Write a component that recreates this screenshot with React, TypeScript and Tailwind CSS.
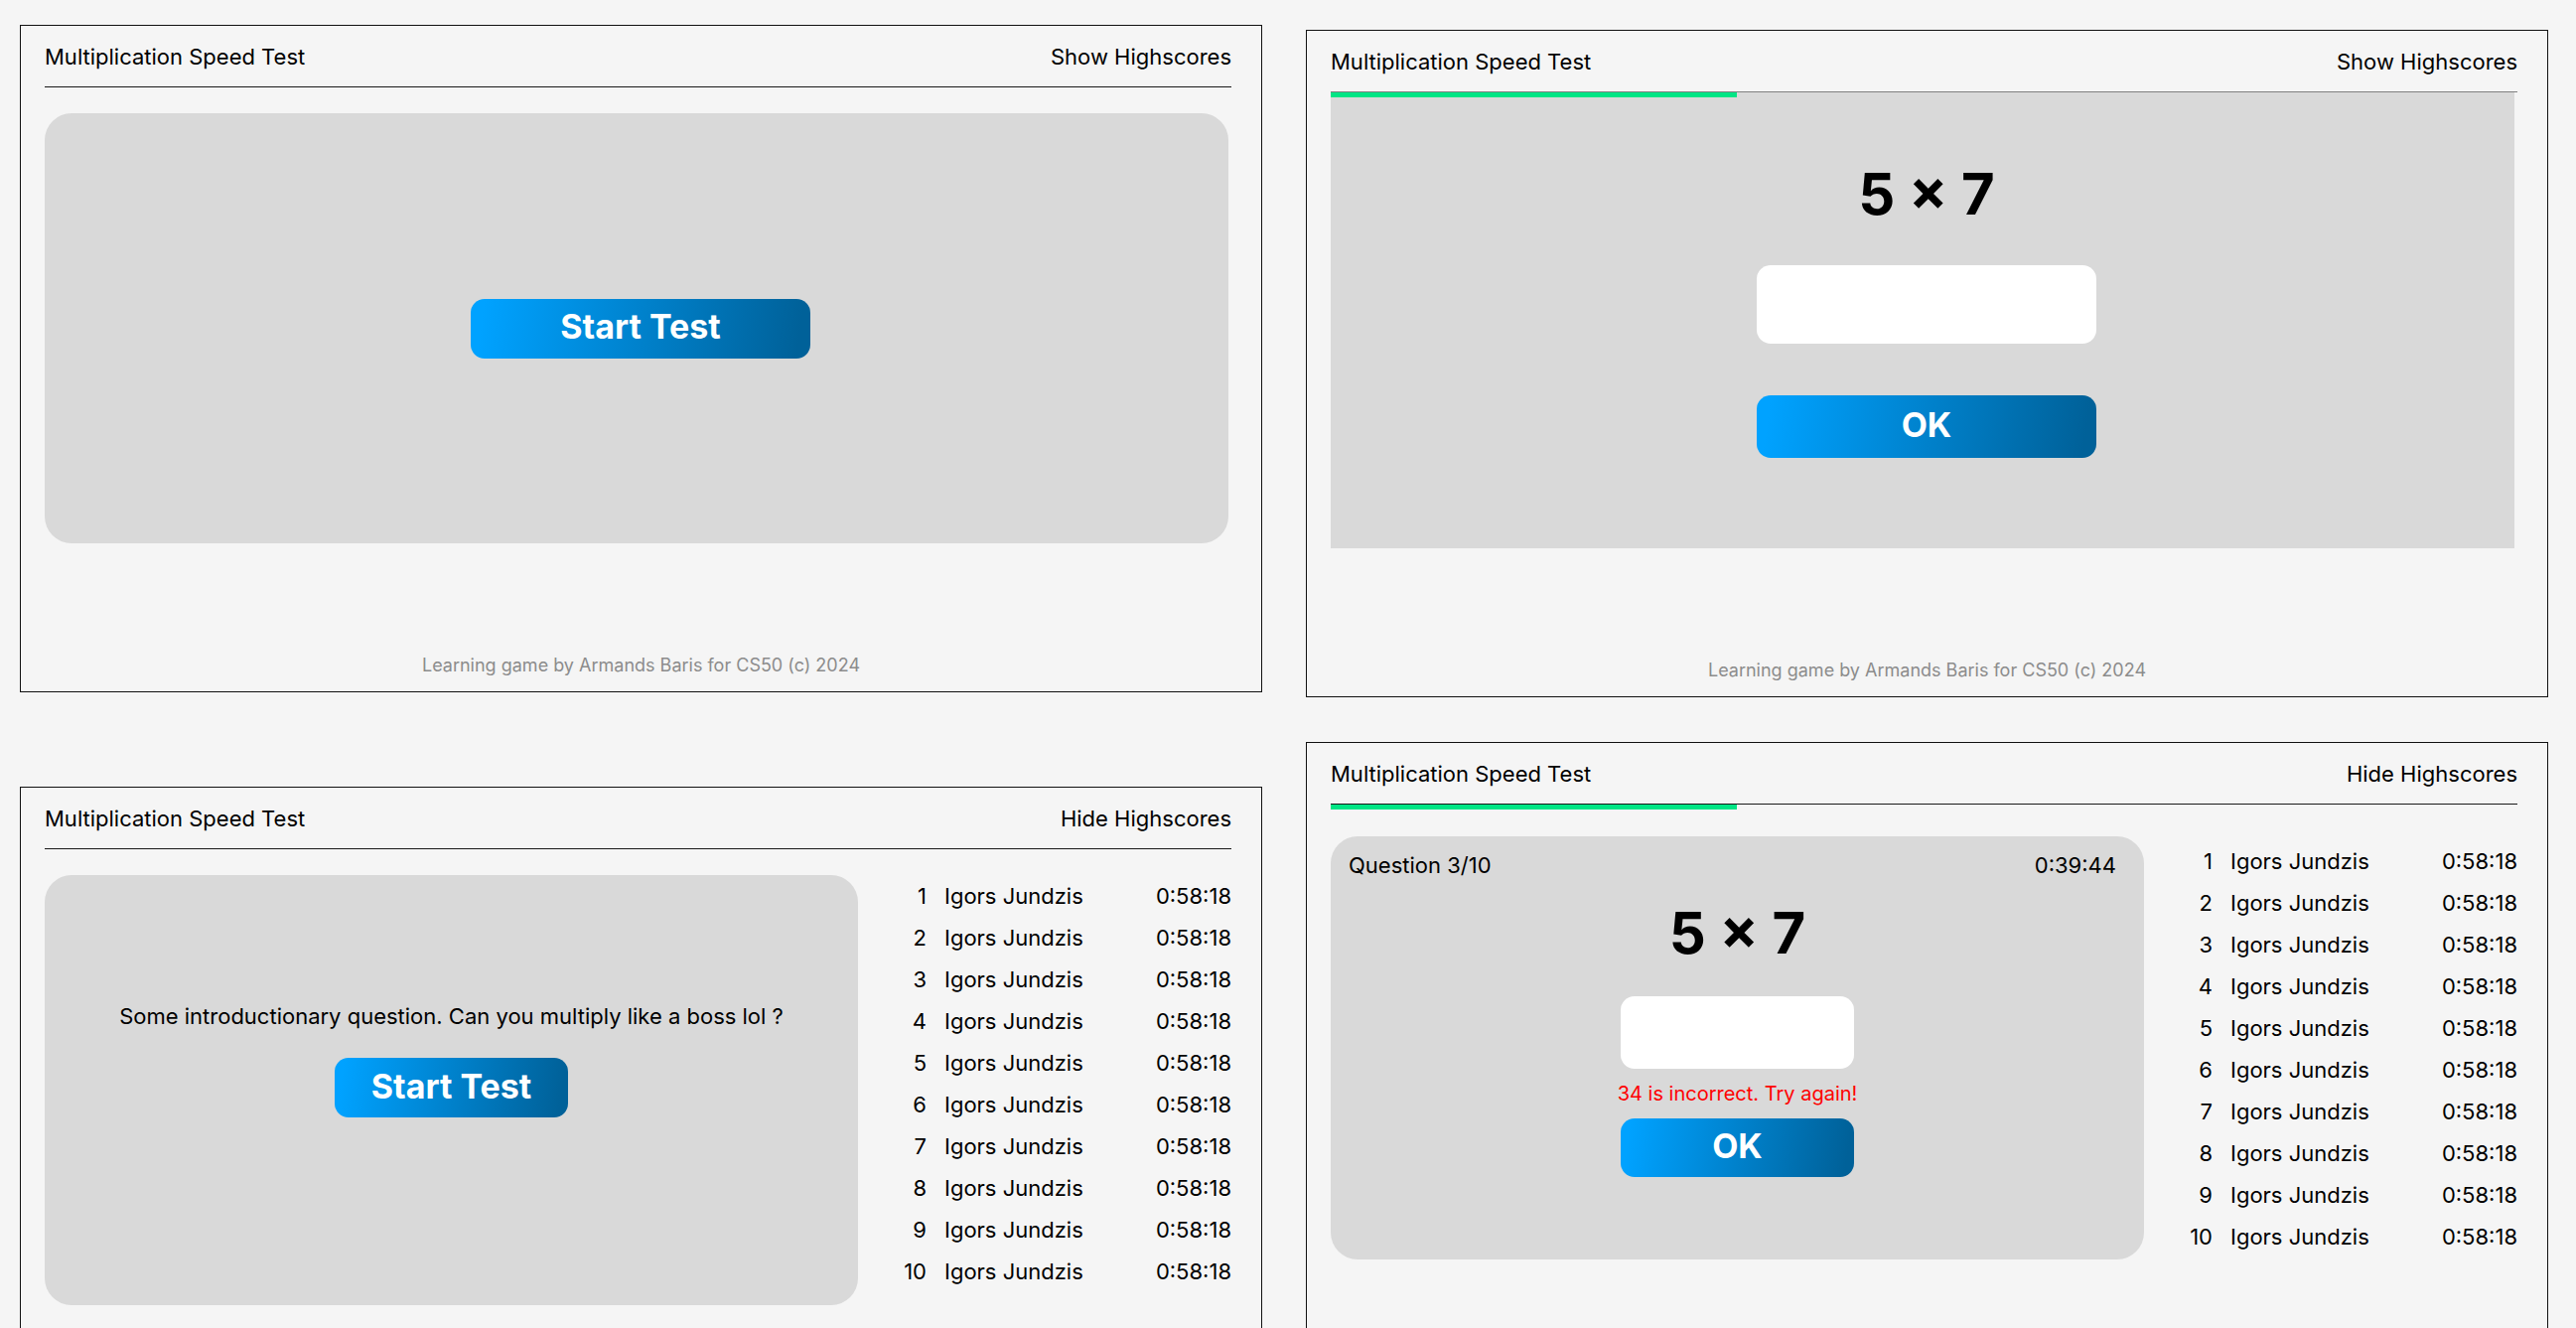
import type { ReactNode } from "react";

const scores = Array.from({ length: 10 }, (_, i) => ({
  rank: i + 1,
  name: "Igors Jundzis",
  time: "0:58:18",
}));

function Frame({
  toggleLabel,
  progress,
  footer,
  rule = "border-[#1a1a1a]",
  className,
  children,
}: {
  toggleLabel: string;
  progress?: number;
  footer?: boolean;
  rule?: string;
  className: string;
  children: ReactNode;
}) {
  return (
    <section className={`flex flex-col border-[#111111] ${className}`}>
      <div className="flex flex-1 flex-col pl-6 pr-[30px]">
        <header className={`relative flex h-[62px] items-center justify-between border-b ${rule}`}>
          <h1>Multiplication Speed Test</h1>
          <button type="button">{toggleLabel}</button>
          {progress !== undefined && (
            <div
              role="progressbar"
              aria-label="Test progress"
              aria-valuenow={progress}
              className="absolute left-0 top-full mt-px h-[5px] bg-[#00e585]"
              style={{ width: `${progress}%` }}
            />
          )}
        </header>
        {children}
      </div>
      {footer && (
        <footer className="pb-3 text-center text-[18px] leading-7 text-[#8c8c8c]">
          Learning game by Armands Baris for CS50 (c) 2024
        </footer>
      )}
    </section>
  );
}

function ActionButton({ className, children }: { className: string; children: ReactNode }) {
  return (
    <button
      type="button"
      className={`rounded-[14px] bg-[linear-gradient(98deg,#00a2ff_4%,#006199_96%)] pb-[3px] text-center text-[34px] font-bold leading-10 text-white ${className}`}
    >
      {children}
    </button>
  );
}

function Equation() {
  return <h2 className="text-center text-[58px] font-bold leading-[72px]">5 × 7</h2>;
}

function Highscores() {
  return (
    <table className="w-full table-fixed self-start" aria-label="Highscores">
      <colgroup>
        <col className="w-[25px]" />
        <col />
        <col className="w-24" />
      </colgroup>
      <tbody>
        {scores.map((s) => (
          <tr key={s.rank} className="h-[42px]">
            <td className="p-0 text-right">{s.rank}</td>
            <td className="p-0 pl-[18px]">{s.name}</td>
            <td className="p-0 text-right">{s.time}</td>
          </tr>
        ))}
      </tbody>
    </table>
  );
}

export default function App() {
  return (
    <main className="grid min-h-screen grid-cols-2 gap-11 bg-[#f5f5f5] pl-5 pr-7 font-['Inter',sans-serif] text-[22px] leading-7 text-black">
      <div className="flex flex-col gap-[95px] pt-[25px]">
        <Frame toggleLabel="Show Highscores" footer className="min-h-[672px] border">
          <div className="mr-[3px] mt-[26px] flex h-[433px] items-center justify-center rounded-[27px] bg-[#d9d9d9] pl-2">
            <ActionButton className="h-[60px] w-[342px]">Start Test</ActionButton>
          </div>
        </Frame>

        <Frame toggleLabel="Hide Highscores" className="flex-1 border border-b-0">
          <div className="mt-[26px] grid grid-cols-[1fr_332px] gap-11">
            <div className="flex h-[433px] flex-col items-center gap-7 rounded-[27px] bg-[#d9d9d9] pt-32">
              <p>Some introductionary question. Can you multiply like a boss lol ?</p>
              <ActionButton className="h-[60px] w-[235px]">Start Test</ActionButton>
            </div>
            <Highscores />
          </div>
        </Frame>
      </div>

      <div className="flex flex-col gap-[45px] pt-[30px]">
        <Frame
          toggleLabel="Show Highscores"
          progress={34.2}
          footer
          rule="border-[#808080]"
          className="min-h-[672px] border"
        >
          <div className="mr-[3px] flex h-[459px] flex-col items-center bg-[#d9d9d9] pl-2 pt-[66px]">
            <Equation />
            <input
              type="text"
              aria-label="Answer"
              className="mt-9 h-[79px] w-[342px] rounded-[14px] bg-white px-5 text-center"
            />
            <ActionButton className="mt-[52px] h-[63px] w-[342px]">OK</ActionButton>
          </div>
        </Frame>

        <Frame toggleLabel="Hide Highscores" progress={34.2} className="flex-1 border border-b-0">
          <div className="mt-8 grid grid-cols-[1fr_332px] gap-11">
            <div className="flex h-[426px] flex-col items-center rounded-[27px] bg-[#d9d9d9] pt-[15px]">
              <div className="flex w-full justify-between pl-[18px] pr-7">
                <span>Question 3/10</span>
                <span>0:39:44</span>
              </div>
              <div className="mt-[18px]">
                <Equation />
              </div>
              <input
                type="text"
                aria-label="Answer"
                aria-describedby="answer-error"
                className="mt-7 h-[73px] w-[235px] rounded-[14px] bg-white px-5 text-center"
              />
              <p id="answer-error" className="my-[11px] text-[20px] text-[#ff0000]">
                34 is incorrect. Try again!
              </p>
              <ActionButton className="h-[59px] w-[235px]">OK</ActionButton>
            </div>
            <div className="pt-1">
              <Highscores />
            </div>
          </div>
        </Frame>
      </div>
    </main>
  );
}
